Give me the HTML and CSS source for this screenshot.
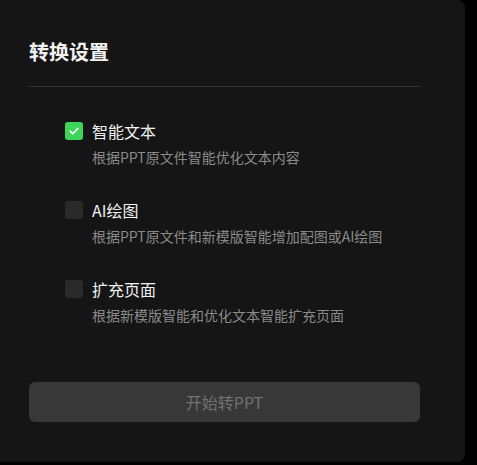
FILE: index.html
```html
<!DOCTYPE html>
<html lang="zh-CN">
<head>
    <meta charset="UTF-8">
    <meta name="viewport" content="width=device-width, initial-scale=1.0">
    <title>转换设置</title>
    <link rel="stylesheet" href="styles.css">
</head>
<body>

    <div class="panel">
        <h2 class="panel-title">转换设置</h2>
        <div class="divider"></div>

        <ul class="options">
            <li class="option">
                <div class="option-head">
                    <span class="checkbox checked">
                        <svg width="12" height="12" viewBox="0 0 12 12"><path d="M2.2 6.2 L4.9 8.8 L9.8 3.4" fill="none" stroke="#fff" stroke-width="1.6" stroke-linecap="round" stroke-linejoin="round"/></svg>
                    </span>
                    <span class="option-label">智能文本</span>
                </div>
                <p class="option-desc">根据PPT原文件智能优化文本内容</p>
            </li>
            <li class="option">
                <div class="option-head">
                    <span class="checkbox"></span>
                    <span class="option-label">AI绘图</span>
                </div>
                <p class="option-desc">根据PPT原文件和新模版智能增加配图或AI绘图</p>
            </li>
            <li class="option">
                <div class="option-head">
                    <span class="checkbox"></span>
                    <span class="option-label">扩充页面</span>
                </div>
                <p class="option-desc">根据新模版智能和优化文本智能扩充页面</p>
            </li>
        </ul>

        <button class="start-btn" disabled>开始转PPT</button>
    </div>

</body>
</html>
```

FILE: styles.css
```css
body {
    margin: 0;
    background-color: #000;
    font-family: "Noto Sans CJK SC", "Noto Sans", sans-serif;
}
.panel {
    width: 465px;
    height: 462px;
    box-sizing: border-box;
    padding: 38px 45px 0 29px;
    background-color: #151515;
    border-radius: 0 8px 8px 0;
}
.panel-title {
    margin: 0;
    font-size: 20px;
    line-height: 28px;
    font-weight: bold;
    color: #f2f2f2;
}
.divider {
    height: 1px;
    margin-top: 20px;
    background-color: #333;
}
.options {
    list-style: none;
    margin: 35px 0 0;
    padding: 0 0 0 36px;
}
.option {
    margin-bottom: 34px;
}
.option:last-child {
    margin-bottom: 0;
}
.option-head {
    display: flex;
    align-items: center;
    gap: 9px;
    height: 18px;
}
.checkbox {
    width: 18px;
    height: 18px;
    border-radius: 3px;
    background-color: #2a2a2a;
    display: flex;
    align-items: center;
    justify-content: center;
}
.checkbox.checked {
    background-color: #3fd45a;
}
.option-label {
    font-size: 16px;
    line-height: 18px;
    color: #f0f0f0;
}
.option-desc {
    margin: 7px 0 0 27px;
    font-size: 14px;
    line-height: 20px;
    color: #8a8a8a;
}
.start-btn {
    display: block;
    width: 100%;
    height: 40px;
    margin-top: 57px;
    border: none;
    border-radius: 6px;
    background-color: #383838;
    color: #727272;
    font-family: inherit;
    font-size: 16px;
}
```
